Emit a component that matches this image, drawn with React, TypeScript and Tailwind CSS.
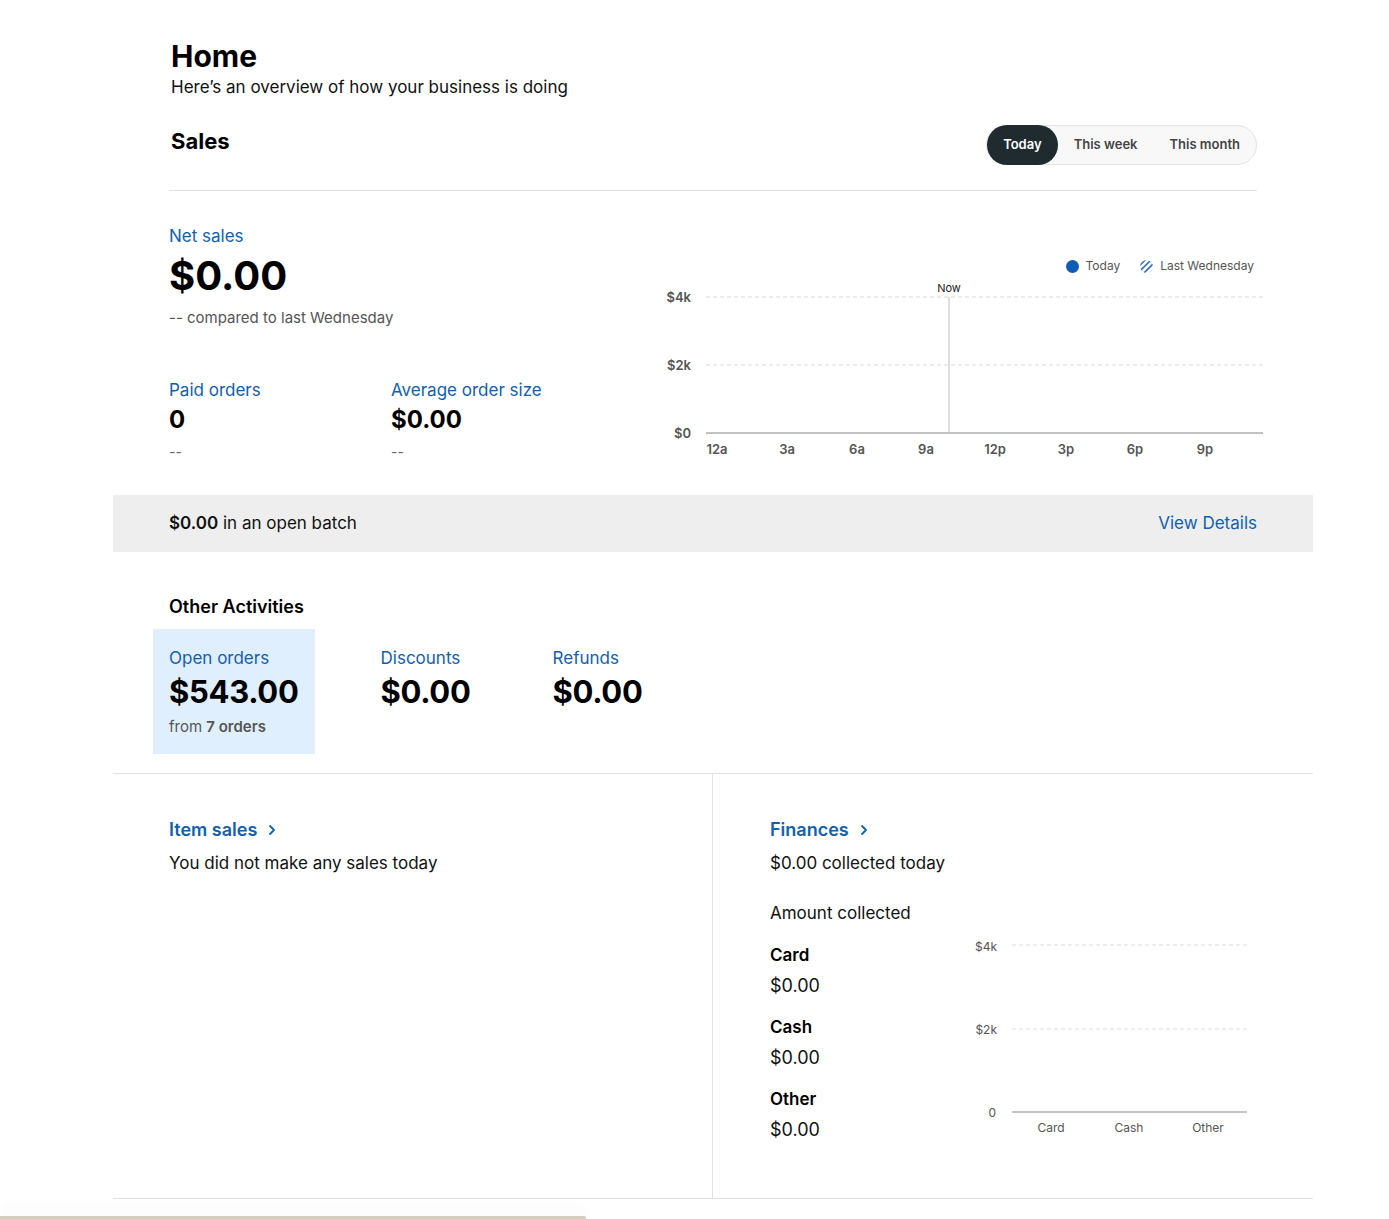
import React from "react";

const BLUE = "text-[#1160ad]";

function Toggle() {
  const items = ["Today", "This week", "This month"];
  return (
    <div className="flex h-10 items-center rounded-full border border-[#e3e3e3] bg-[#f8f8f8]">
      {items.map((t, i) => (
        <button
          key={t}
          className={
            i === 0
              ? "h-10 rounded-full bg-[#1f2b2f] px-4 text-[13px] font-semibold text-white"
              : "h-10 px-4 text-[13px] font-semibold text-[#444]"
          }
        >
          {t}
        </button>
      ))}
    </div>
  );
}

function Metric({ label, value, sub }: { label: string; value: string; sub: string }) {
  return (
    <div>
      <div className={`text-[17px] leading-[20px] ${BLUE}`}>{label}</div>
      <div className="mt-[5px] text-[24px] font-bold leading-[30px] text-black">{value}</div>
      <div className="mt-[7px] text-[14px] leading-[20px] text-[#666]">{sub}</div>
    </div>
  );
}

function HatchIcon() {
  return (
    <svg width="13" height="13" viewBox="0 0 13 13">
      <defs>
        <clipPath id="hc">
          <circle cx="6.5" cy="6.5" r="6.5" />
        </clipPath>
      </defs>
      <g clipPath="url(#hc)" stroke="#2f6fbd" strokeWidth="1.6">
        <line x1="-2" y1="7" x2="7" y2="-2" />
        <line x1="0" y1="11" x2="11" y2="0" />
        <line x1="3" y1="14" x2="14" y2="3" />
        <line x1="7" y1="16" x2="16" y2="7" />
      </g>
    </svg>
  );
}

function SalesChart() {
  const hours = ["12a", "3a", "6a", "9a", "12p", "3p", "6p", "9p"];
  const xs = [62, 132, 202, 271, 340, 411, 480, 550];
  return (
    <div className="w-[608px]">
      <div className="flex items-center justify-end gap-[20px] pr-[9px] text-[12px] text-[#555]">
        <div className="flex items-center gap-[7px]">
          <span className="h-[13px] w-[13px] rounded-full bg-[#0f5bb5]" />
          <span>Today</span>
        </div>
        <div className="flex items-center gap-[7px]">
          <HatchIcon />
          <span>Last Wednesday</span>
        </div>
      </div>
      <svg width="608" height="182" viewBox="0 0 608 182" className="mt-[6px] block">
        <text x="294" y="11" textAnchor="middle" fontSize="11" fill="#222">Now</text>
        <line x1="51" y1="16" x2="608" y2="16" stroke="#d9d9d9" strokeDasharray="4 3" />
        <line x1="51" y1="84" x2="608" y2="84" stroke="#d9d9d9" strokeDasharray="4 3" />
        <line x1="294" y1="16" x2="294" y2="152" stroke="#bdbdbd" />
        <line x1="51" y1="152" x2="608" y2="152" stroke="#c2c2c2" strokeWidth="2" />
        <g fontSize="13" fontWeight="600" fill="#555" textAnchor="end">
          <text x="36" y="21">$4k</text>
          <text x="36" y="89">$2k</text>
          <text x="36" y="157">$0</text>
        </g>
        <g fontSize="13" fontWeight="600" fill="#555" textAnchor="middle">
          {hours.map((h, i) => (
            <text key={h} x={xs[i]} y="173">{h}</text>
          ))}
        </g>
      </svg>
    </div>
  );
}

function Activity({
  label,
  value,
  sub,
  active,
}: {
  label: string;
  value: string;
  sub?: React.ReactNode;
  active?: boolean;
}) {
  return (
    <div className={`h-[125px] px-4 pt-[18px] ${active ? "bg-[#e0effd]" : ""}`}>
      <div className={`text-[17px] leading-[22px] ${BLUE}`}>{label}</div>
      <div className="mt-[4px] text-[31px] font-bold leading-[38px] tracking-[-0.01em] text-black">{value}</div>
      {sub && <div className="mt-[6px] text-[15px] leading-[20px] text-[#555]">{sub}</div>}
    </div>
  );
}

function Chevron() {
  return (
    <svg width="10" height="12" viewBox="0 0 10 12" className="ml-[10px]">
      <path d="M3 2l4 4-4 4" fill="none" stroke="#1160ad" strokeWidth="1.8" strokeLinecap="round" strokeLinejoin="round" />
    </svg>
  );
}

function FinanceChart() {
  return (
    <svg width="290" height="205" viewBox="0 0 290 205" className="block">
      <line x1="52" y1="9" x2="287" y2="9" stroke="#dcdcdc" strokeDasharray="4 3" />
      <line x1="52" y1="93" x2="287" y2="93" stroke="#dcdcdc" strokeDasharray="4 3" />
      <line x1="52" y1="176" x2="287" y2="176" stroke="#c4c4c4" strokeWidth="2" />
      <g fontSize="12" fill="#555" textAnchor="end">
        <text x="37" y="15">$4k</text>
        <text x="37" y="98">$2k</text>
        <text x="36" y="181">0</text>
      </g>
      <g fontSize="12" fill="#555" textAnchor="middle">
        <text x="91" y="196">Card</text>
        <text x="169" y="196">Cash</text>
        <text x="248" y="196">Other</text>
      </g>
    </svg>
  );
}

export default function App() {
  return (
    <div className="min-h-screen bg-white font-['Inter','Liberation_Sans',sans-serif] text-[#111]">
      <div className="ml-[113px] w-[1200px]">
        {/* header */}
        <div className="px-14 pt-[38px]">
          <h1 className="pl-[2px] text-[30px] font-bold leading-[36px] text-black">Home</h1>
          <p className="mt-[2px] pl-[2px] text-[17px] leading-[22px] text-[#111]">
            Here’s an overview of how your business is doing
          </p>
          <div className="mt-[27px] flex items-center justify-between border-b border-[#e2e2e2] pb-[25px] pl-[2px]">
            <h2 className="-mt-[8px] text-[22px] font-bold leading-[28px] text-black">Sales</h2>
            <Toggle />
          </div>
        </div>

        {/* sales body */}
        <div className="flex h-[304px] pl-14 pt-[35px]">
          <div className="w-[486px]">
            <div className={`text-[17px] leading-[20px] ${BLUE}`}>Net sales</div>
            <div className="mt-[6px] text-[40px] font-bold leading-[48px] text-black">$0.00</div>
            <div className="mt-[8px] text-[15px] leading-[20px] text-[#555]">
              -- compared to last Wednesday
            </div>
            <div className="mt-[52px] flex">
              <div className="w-[222px]">
                <Metric label="Paid orders" value="0" sub="--" />
              </div>
              <Metric label="Average order size" value="$0.00" sub="--" />
            </div>
          </div>
          <div className="pt-[31px]">
            <SalesChart />
          </div>
        </div>

        {/* batch */}
        <div className="flex h-[57px] items-center justify-between bg-[#eeeeee] px-14">
          <div className="text-[17px]">
            <span className="font-semibold">$0.00</span> in an open batch
          </div>
          <a className={`text-[17px] ${BLUE}`}>View Details</a>
        </div>

        {/* other activities */}
        <div className="pb-[19px] pt-[43px]">
          <h3 className="px-14 text-[18px] font-semibold leading-[24px] text-black">Other Activities</h3>
          <div className="mt-[10px] flex gap-[50px] pl-10">
            <Activity
              active
              label="Open orders"
              value="$543.00"
              sub={
                <>
                  from <span className="font-semibold">7 orders</span>
                </>
              }
            />
            <Activity label="Discounts" value="$0.00" />
            <Activity label="Refunds" value="$0.00" />
          </div>
        </div>

        {/* bottom */}
        <div className="grid grid-cols-2 border-y border-[#e2e2e2]">
          <div className="border-r border-[#e2e2e2] px-14 pt-[44px]">
            <div className={`flex items-center text-[18px] font-semibold leading-[24px] ${BLUE}`}>
              Item sales <Chevron />
            </div>
            <div className="mt-[10px] text-[17px] leading-[22px]">You did not make any sales today</div>
          </div>
          <div className="pb-[56px] pl-[57px] pt-[44px]">
            <div className={`flex items-center text-[18px] font-semibold leading-[24px] ${BLUE}`}>
              Finances <Chevron />
            </div>
            <div className="mt-[10px] text-[17px] leading-[22px]">$0.00 collected today</div>
            <div className="mt-[28px] text-[17px] leading-[22px]">Amount collected</div>
            <div className="mt-[13px] flex">
              <div className="flex w-[190px] flex-col gap-[17px] pt-[6px]">
                {["Card", "Cash", "Other"].map((k) => (
                  <div key={k}>
                    <div className="text-[17px] font-semibold leading-[24px] text-black">{k}</div>
                    <div className="mt-[7px] text-[18px] leading-[24px]">$0.00</div>
                  </div>
                ))}
              </div>
              <div className="-mt-[1px]">
                <FinanceChart />
              </div>
            </div>
          </div>
        </div>
      </div>
      <div className="mt-[17px] h-[4px] w-[586px] rounded-tr-[2px] bg-[#d6cdc1] shadow-[0_-8px_14px_rgba(0,0,0,0.05)]" />
    </div>
  );
}
